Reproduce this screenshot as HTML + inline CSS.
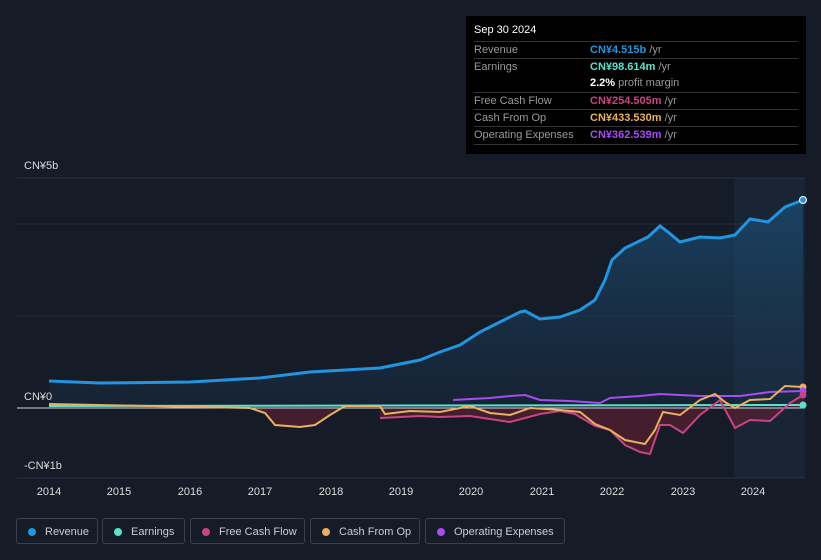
<!DOCTYPE html><html><head><style>
body{margin:0;width:821px;height:560px;background:#151b27;font-family:"Liberation Sans",sans-serif;overflow:hidden;position:relative}
.tt{position:absolute;left:466px;top:16px;width:340px;height:138px;background:#000;color:#999;font-size:11px}
.tt .h{position:absolute;left:8px;top:8px;color:#fff;font-size:11px}
.row{position:absolute;left:8px;width:324px;border-top:1px solid #333;height:17px;line-height:17px}
.row span{position:absolute;left:116px;font-weight:bold}
.row i{font-style:normal;color:#999;font-weight:normal}
.lbl{position:absolute;color:#ddd;font-size:11px}
.leg{position:absolute;top:518px;height:26px;border:1px solid #3a404c;border-radius:3px;color:#ccc;font-size:11px;line-height:26px;box-sizing:border-box}
.leg b{position:absolute;left:11px;top:9px;width:8px;height:8px;border-radius:50%}
.leg span{position:absolute;left:28px}
</style></head><body>
<svg width="821" height="560" style="position:absolute;left:0;top:0">
<defs><linearGradient id="g" x1="0" y1="0" x2="0" y2="1"><stop offset="0" stop-color="#1a4a6e" stop-opacity=".8"/><stop offset="1" stop-color="#1a3550" stop-opacity=".3"/></linearGradient></defs>
<rect x="734" y="178" width="71" height="300" fill="#1b2a3c" opacity=".7"/>
<line x1="17" y1="178" x2="805" y2="178" stroke="#2b3240"/>
<line x1="17" y1="224" x2="805" y2="224" stroke="#262d3a"/>
<line x1="17" y1="316" x2="805" y2="316" stroke="#262d3a"/>
<line x1="17" y1="478" x2="805" y2="478" stroke="#2b3240"/>
<path d="M49,381L100,383L190,382L260,378L310,372L380,368L420,360L440,352L460,345L480,332L500,322L520,312L525,311L540,319L560,317L580,310L595,300L605,280L612,260L625,248L648,237L660,226L668,232L680,242L700,237L720,238L735,235L750,219L768,222L785,207L803,200L803,408L49,408Z" fill="url(#g)"/>
<path d="M380,418L420,416L440,417L470,416L510,422L540,414L560,411L575,414L595,426L610,430L625,445L640,452L650,454L660,425L670,425L683,433L700,415L720,400L735,428L750,420L770,421L790,403L803,395L803,408L380,408Z" fill="#5a2030" opacity=".7"/>
<path d="M250,408L265,413L275,425L300,427L315,425L330,415L345,408Z" fill="#5a2030" opacity=".7"/>
<line x1="17" y1="408" x2="805" y2="408" stroke="#cfd3da" stroke-width="1"/>
<path d="M49,406L803,405" stroke="#5fe0cc" stroke-width="2" fill="none"/>
<path d="M453,400L490,398L510,396L525,395L540,400L570,401L600,403L610,398L640,396L660,394L700,396L740,396L770,392L803,391" stroke="#a64cf0" stroke-width="2" fill="none"/>
<path d="M380,418L420,416L440,417L470,416L510,422L540,414L560,411L575,414L595,426L610,430L625,445L640,452L650,454L660,425L670,425L683,433L700,415L720,400L735,428L750,420L770,421L790,403L803,395" stroke="#c84485" stroke-width="2" fill="none"/>
<path d="M49,404L250,408L265,413L275,425L300,427L315,425L330,415L345,406L380,406L385,414L410,411L440,412L470,406L490,413L510,415L530,408L560,410L580,412L595,424L610,430L625,440L645,444L655,430L663,412L680,415L700,400L715,394L725,402L735,408L750,400L770,399L785,386L803,387" stroke="#e8b060" stroke-width="2" fill="none"/>
<path d="M49,381L100,383L190,382L260,378L310,372L380,368L420,360L440,352L460,345L480,332L500,322L520,312L525,311L540,319L560,317L580,310L595,300L605,280L612,260L625,248L648,237L660,226L668,232L680,242L700,237L720,238L735,235L750,219L768,222L785,207L803,200" stroke="#2394e0" stroke-width="3" fill="none"/>
<circle cx="803" cy="200" r="3.5" fill="#2394e0" stroke="#fff"/>
<circle cx="803" cy="387" r="3.5" fill="#e8b060"/><circle cx="803" cy="391" r="3.5" fill="#a64cf0"/><circle cx="803" cy="395" r="3.5" fill="#c84485"/><circle cx="803" cy="405" r="3.5" fill="#5fe0cc"/>
<g fill="#ddd" font-size="11" font-family="Liberation Sans" text-anchor="middle">
<text x="49" y="495">2014</text><text x="119" y="495">2015</text><text x="190" y="495">2016</text><text x="260" y="495">2017</text><text x="331" y="495">2018</text><text x="401" y="495">2019</text><text x="471" y="495">2020</text><text x="542" y="495">2021</text><text x="612" y="495">2022</text><text x="683" y="495">2023</text><text x="753" y="495">2024</text></g>
</svg>
<div class="lbl" style="left:24px;top:160px">CN¥5b</div>
<div class="lbl" style="left:24px;top:391px">CN¥0</div>
<div class="lbl" style="left:24px;top:460px">-CN¥1b</div>
<div class="tt"><div class="h">Sep 30 2024</div>
<div class="row" style="top:25px">Revenue<span style="color:#2394e0">CN¥4.515b <i>/yr</i></span></div>
<div class="row" style="top:42px">Earnings<span style="color:#5fe0cc">CN¥98.614m <i>/yr</i></span></div>
<div class="row" style="top:59px;border-top:none"><span style="color:#fff">2.2% <i>profit margin</i></span></div>
<div class="row" style="top:76px">Free Cash Flow<span style="color:#c84485">CN¥254.505m <i>/yr</i></span></div>
<div class="row" style="top:93px">Cash From Op<span style="color:#e8b060">CN¥433.530m <i>/yr</i></span></div>
<div class="row" style="top:110px;border-bottom:1px solid #333">Operating Expenses<span style="color:#a64cf0">CN¥362.539m <i>/yr</i></span></div>
</div>
<div class="leg" style="left:16px;width:82px"><b style="background:#2394e0"></b><span>Revenue</span></div>
<div class="leg" style="left:102px;width:83px"><b style="background:#5fe0cc"></b><span>Earnings</span></div>
<div class="leg" style="left:190px;width:115px"><b style="background:#c84485"></b><span>Free Cash Flow</span></div>
<div class="leg" style="left:310px;width:110px"><b style="background:#e8b060"></b><span>Cash From Op</span></div>
<div class="leg" style="left:425px;width:140px"><b style="background:#a64cf0"></b><span>Operating Expenses</span></div>
</body></html>
